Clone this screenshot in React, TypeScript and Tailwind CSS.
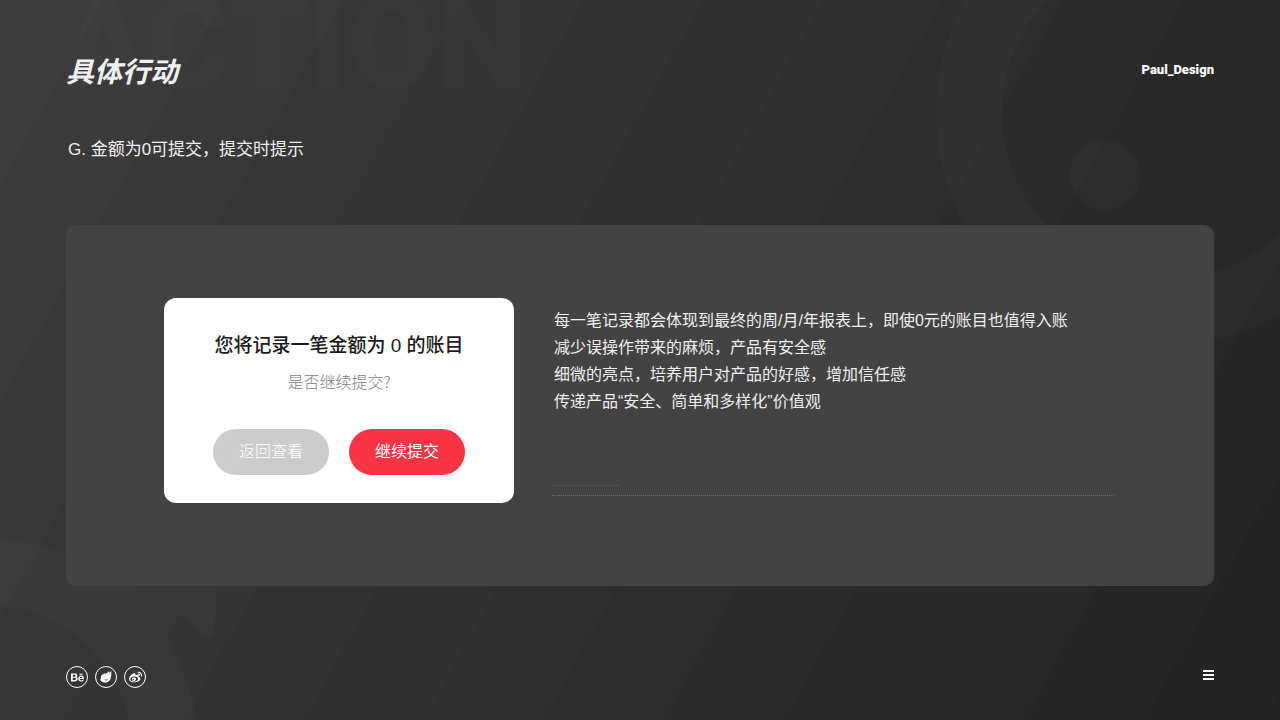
import React from 'react';
import { FaBehance, FaWeibo } from 'react-icons/fa';

const points = [
  '每一笔记录都会体现到最终的周/月/年报表上，即使0元的账目也值得入账',
  '减少误操作带来的麻烦，产品有安全感',
  '细微的亮点，培养用户对产品的好感，增加信任感',
  '传递产品“安全、简单和多样化”价值观',
]

// hard-edged diagonal bands, getting darker towards the bottom right
const BANDS = 15
const bandStops = Array.from({ length: BANDS }, (_, i) => {
  const level = Math.round(60 - (i * 26) / (BANDS - 1))
  const from = i === 0 ? 0 : 6.1 + (i - 1) * 7.15
  const to = i === BANDS - 1 ? 100 : 6.1 + i * 7.15
  return `rgb(${level},${level},${level}) ${from}% ${to}%`
})
const bandGradient = `linear-gradient(119deg, ${bandStops.join(', ')})`

function ZcoolIcon() {
  return (
    <svg viewBox="0 0 24 24" className="w-3 h-3" fill="currentColor" aria-hidden="true">
      <path
        fillRule="evenodd"
        d="M23 0C21.500 1.500 20 2.600 18.300 3.600 18.500 2.300 18.400 1.200 18 0 16.500 2.500 14.500 4 12 5 9 5.200 6 5.500 3.800 8 2 10 1.500 12 2 14.500 .8 15.500.3 17 1 18.500 1.800 20.500 3.500 21 5 21.300 7 23.200 11 23.500 14.500 22.300 19 20.700 21.800 17 21.500 12.500 21.800 11 22.500 10 23 8.500L21.800 9C22.500 7.500 22.800 6 22.500 4.500L21.500 5.500C22.500 3.800 23 2 23 0zM8.500 17.200C11 18.200 14 17.500 16 15 15.500 18.500 11.500 20.500 8.500 17.200z"
      />
    </svg>
  )
}

const links = [
  { label: 'Behance', icon: <FaBehance className="w-[13px] h-[13px]" /> },
  { label: 'Zcool', icon: <ZcoolIcon /> },
  { label: 'Weibo', icon: <FaWeibo className="w-[13px] h-[13px]" /> },
]

function Backdrop() {
  return (
    <div
      className="absolute inset-0 overflow-hidden pointer-events-none"
      style={{ backgroundImage: bandGradient }}
      aria-hidden="true"
    >
      <div className="absolute left-[60px] top-0 font-[Roboto] text-[128px] leading-[88px] font-black text-white/[0.012]">
        ACTION
      </div>
      {/* ring and dot, top right */}
      <svg className="absolute right-0 top-0 w-[360px] h-[360px]" viewBox="920 0 360 360">
        <circle cx="1167" cy="113" r="198" fill="none" stroke="#fff" strokeWidth="66" opacity="0.02" />
        <circle cx="1105" cy="175" r="35" fill="#fff" opacity="0.02" />
      </svg>
      {/* ring and spark, bottom left */}
      <svg className="absolute left-0 bottom-0 w-[240px] h-[200px]" viewBox="0 520 240 200">
        <g fill="#fff" opacity="0.014">
          <circle cx="-10" cy="748" r="175" fill="none" stroke="#fff" strokeWidth="66" />
          <path d="M110 580L217 580L214 630Q211 640 204 635L180 613L165 638L97 655Z" />
        </g>
      </svg>
    </div>
  )
}

export default function App() {
  return (
    <div className="relative min-h-screen flex flex-col px-[66px] bg-[#2f2f2f] font-['Liberation_Sans','Noto_Sans_CJK_SC',sans-serif] text-white">
      <Backdrop />

      <header className="relative flex items-center justify-between pt-12">
        <h1 className="text-[28px] leading-[44px] font-bold italic text-[#f0f0f0] font-['Noto_Sans_CJK_SC',sans-serif]">
          具体行动
        </h1>
        <span className="font-[Roboto] text-[13px] font-black">Paul_Design</span>
      </header>

      <h2 className="relative mt-[43px] pl-0.5 text-[17px] leading-[30px] font-normal text-[#f0f0f0]">
        G. 金额为0可提交，提交时提示
      </h2>

      <main className="relative mt-[60px] flex gap-[38px] rounded-[10px] bg-[#434343] pt-[73px] pb-[83px] pl-[98px] pr-[100px]">
        {/* Confirm dialog */}
        <section className="w-[350px] shrink-0 rounded-xl bg-white pt-8 pb-7 text-center">
          <h3 className="text-[19px] leading-[32px] font-medium text-[#1a1a1a]">
            您将记录一笔金额为 0 的账目
          </h3>
          <p className="mt-1.5 text-base leading-[26px] font-light text-[#808080] font-['Noto_Sans_CJK_SC',sans-serif]">
            是否继续提交?
          </p>
          <div className="mt-[35px] flex justify-center gap-5">
            <button type="button" className="w-[116px] h-[46px] rounded-full bg-[#cccccc] text-base font-light">
              返回查看
            </button>
            <button type="button" className="w-[116px] h-[46px] rounded-full bg-[#fa3543] text-base font-normal">
              继续提交
            </button>
          </div>
        </section>

        {/* Rationale */}
        <section className="flex-1 pt-[9px]">
          <ul className="pl-0.5 text-base leading-[27px] font-normal text-[#f0f0f0]">
            {points.map((point) => (
              <li key={point}>{point}</li>
            ))}
          </ul>
          <div className="mt-[70px] w-[67px] border-t border-dotted border-[#5c5c5c]" />
          <div className="mt-[9px] border-t border-dotted border-[#6c6c6c]" />
        </section>
      </main>

      <footer className="relative mt-auto flex items-center justify-between pb-8">
        <nav className="flex gap-[7px]">
          {links.map((link) => (
            <a
              key={link.label}
              href="#"
              aria-label={link.label}
              className="flex w-[22px] h-[22px] items-center justify-center rounded-full border border-white"
            >
              {link.icon}
            </a>
          ))}
        </nav>
        <button type="button" aria-label="菜单" className="flex flex-col gap-0.5 pb-1">
          <span className="w-[11px] h-0.5 bg-white" />
          <span className="w-[11px] h-0.5 bg-white" />
          <span className="w-[11px] h-0.5 bg-white" />
        </button>
      </footer>
    </div>
  )
}
